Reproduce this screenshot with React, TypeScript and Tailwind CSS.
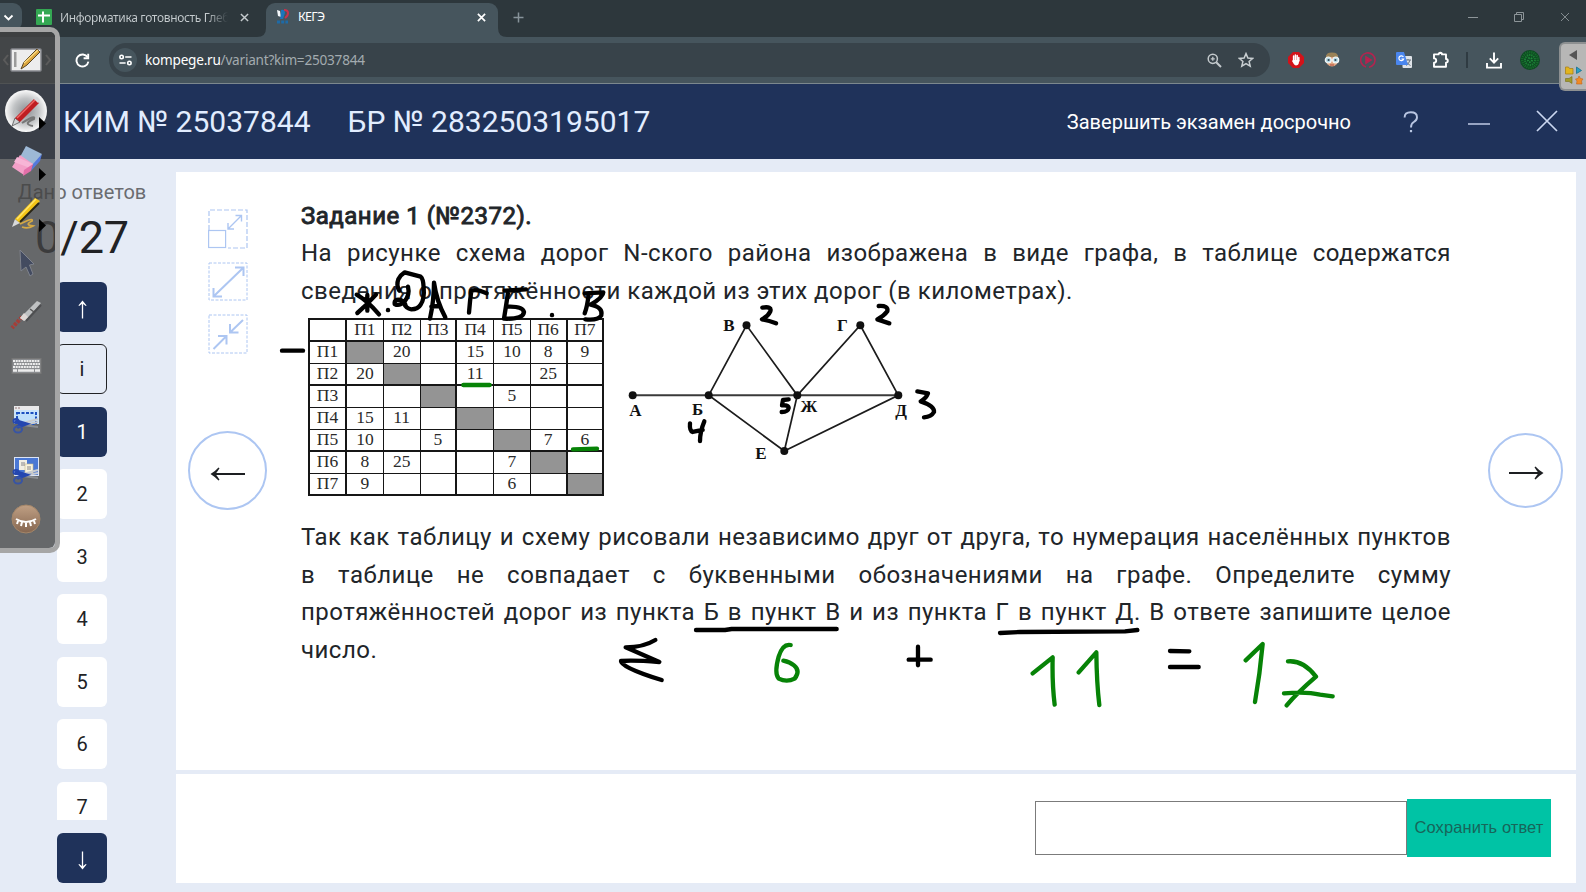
import type { ReactNode } from "react";

const numbers = ["2", "3", "4", "5", "6", "7"];

const table: string[][] = [
  ["", "П1", "П2", "П3", "П4", "П5", "П6", "П7"],
  ["П1", "#", "20", "", "15", "10", "8", "9"],
  ["П2", "20", "#", "", "11", "", "25", ""],
  ["П3", "", "", "#", "", "5", "", ""],
  ["П4", "15", "11", "", "#", "", "", ""],
  ["П5", "10", "", "5", "", "#", "7", "6"],
  ["П6", "8", "25", "", "", "7", "#", ""],
  ["П7", "9", "", "", "", "6", "", "#"],
];

const thickRight = [0, 3, 6, 7];
const thickBottom = [0, 2, 5, 7];

function CloseIcon({ size, color, width }: { size: number; color: string; width: number }) {
  return (
    <svg width={size} height={size} viewBox="0 0 10 10" fill="none" stroke={color} strokeWidth={width}>
      <path d="M1 1 L9 9 M9 1 L1 9" />
    </svg>
  );
}

function TabStrip() {
  return (
    <div className="flex h-[37px] bg-[#2d373c] font-['Noto_Sans','Open_Sans',sans-serif] text-[12.5px]">
      <div className="mt-[3px] flex h-[28px] w-[22px] items-center rounded-r-[9px] bg-[#46555d] pl-[3px]">
        <svg width="11" height="11" viewBox="0 0 11 11" fill="none" stroke="#fff" strokeWidth="1.8"><path d="M1.5 3.5 L5.5 7.5 L9.5 3.5" /></svg>
      </div>
      <div className="flex h-[34px] w-[244px] items-center pl-[14px]">
        <svg width="16" height="16" viewBox="0 0 16 16"><rect width="16" height="16" rx="1" fill="#34a853" /><path d="M7 2.5 V13.5 M2 6.5 H14" stroke="#fff" strokeWidth="2" /></svg>
        <div className="ml-[8px] mt-[1px] w-[168px] whitespace-nowrap bg-gradient-to-r from-[#c5cbce] from-88% to-[#2d373c] bg-clip-text text-[12px] tracking-[-0.34px] text-transparent">
          Информатика готовность Глеб
        </div>
        <div className="ml-[12px]"><CloseIcon size={9} color="#c5cbce" width={1.6} /></div>
      </div>
      <div className="relative mt-[3px] flex h-[34px] w-[232px] items-center rounded-t-[9px] bg-[#46555d] pl-[10px] pb-[6px]">
        <svg width="13" height="16" viewBox="0 0 13 16">
          <path d="M1 1 L4 2 L5 8 L2 7 Z" fill="#f4f8fb" />
          <path d="M5 1 Q9 0 9 4 Q8 7 7 10 H4 Q5 6 5 1" fill="#1b75bb" />
          <path d="M8 1 Q12 1 12 4 Q12 7 9 9" fill="none" stroke="#c8324c" strokeWidth="2" />
          <path d="M1 13 H12" stroke="#1d6ba8" strokeWidth="3" strokeDasharray="3 1.2" />
        </svg>
        <span className="ml-[9px] mt-[1px] tracking-[-0.75px] text-white">КЕГЭ</span>
        <div className="ml-auto mr-[12px]"><CloseIcon size={9} color="#fff" width={1.9} /></div>
        <svg className="absolute -left-[9px] bottom-0" width="9" height="9" viewBox="0 0 9 9"><path d="M9 0 V9 H0 Q9 9 9 0" fill="#46555d" /></svg>
        <svg className="absolute -right-[9px] bottom-0" width="9" height="9" viewBox="0 0 9 9"><path d="M0 0 V9 H9 Q0 9 0 0" fill="#46555d" /></svg>
      </div>
      <div className="flex h-[34px] w-[40px] items-center justify-center">
        <svg width="11" height="11" viewBox="0 0 11 11" stroke="#87939a" strokeWidth="1.5"><path d="M5.5 0.5 V10.5 M0.5 5.5 H10.5" /></svg>
      </div>
      <div className="ml-auto flex h-[34px] items-center pr-[16px]">
        <svg width="10" height="10" viewBox="0 0 10 10" stroke="#8d9599"><path d="M0 5.5 H10" /></svg>
        <svg className="ml-[36px]" width="10" height="10" viewBox="0 0 10 10" fill="none" stroke="#8d9599"><path d="M0.5 2.5 H7.5 V9.5 H0.5 Z M2.5 2.5 V0.5 H9.5 V7.5 H7.5" /></svg>
        <div className="ml-[36px]"><CloseIcon size={10} color="#8d9599" width={0.9} /></div>
      </div>
    </div>
  );
}

function AddressBar() {
  return (
    <div className="flex h-[47px] items-center border-b border-[#7c888e] bg-[#46555d] pl-[75px]">
      <svg width="15" height="15" viewBox="0 0 15 15" fill="none" stroke="#fff" strokeWidth="1.9"><path d="M12.6 4.3 A6 6 0 1 0 13.4 8.6" /><path d="M13.2 0.8 V5.2 H8.6" /></svg>
      <div className="ml-[19px] flex h-[34px] w-[1161px] items-center rounded-full bg-[#38434a] pl-[4px] pr-[16px]">
        <div className="flex size-[24px] items-center justify-center rounded-full bg-[#46555d]">
          <svg width="13" height="12" viewBox="0 0 13 12" fill="none" stroke="#fff" strokeWidth="1.6"><circle cx="2.6" cy="3" r="1.7" /><path d="M6.2 3 H12.5 M0.5 9 H6.6" /><circle cx="10.4" cy="9" r="1.7" /></svg>
        </div>
        <span className="ml-[8px] whitespace-nowrap font-['Noto_Sans','Open_Sans',sans-serif] text-[13.6px] tracking-[-0.23px] text-[#a3abaf]">
          <span className="text-white">kompege.ru</span>/variant?kim=25037844
        </span>
        <svg className="ml-auto" width="15" height="15" viewBox="0 0 15 15" fill="none" stroke="#c3c9cc" strokeWidth="1.5"><circle cx="5.8" cy="5.8" r="4.6" /><path d="M9.2 9.2 L14 14" strokeWidth="2" /><path d="M3.8 5.8 H7.8 M5.8 3.8 V7.8" strokeWidth="1.3" /></svg>
        <svg className="ml-[16px]" width="16" height="16" viewBox="0 0 16 16" fill="none" stroke="#c9cfd2" strokeWidth="1.5"><path d="M8 1.6 L9.9 6 L14.7 6.4 L11.1 9.5 L12.2 14.2 L8 11.7 L3.8 14.2 L4.9 9.5 L1.3 6.4 L6.1 6 Z" /></svg>
      </div>
      <div className="ml-[18px] flex items-center gap-[20px]">
        <svg width="16" height="16" viewBox="0 0 16 16"><path d="M5 0 H11 L16 5 V11 L11 16 H5 L0 11 V5 Z" fill="#d31219" /><path d="M5.6 4 V9 M7.4 3 V9 M9.2 3.6 V9 M10.8 5.4 V9" stroke="#fff" strokeWidth="1.5" strokeLinecap="round" /><path d="M5 8 H11.4 L10.6 12 Q10 13.4 8 13.4 Q6.6 13.4 5.8 12 L4 9 Z" fill="#fff" /></svg>
        <svg width="16" height="16" viewBox="0 0 16 16"><path d="M2 6 Q2 1 8 1 Q14 1 14 6 L13 12 Q8 17 3 12 Z" fill="#e0a682" /><path d="M2 5 Q2 0.6 8 0.6 Q14 0.6 14 5 Z" fill="#9a8257" /><circle cx="4.3" cy="8" r="3" fill="#b8dde8" stroke="#f5f7f7" strokeWidth="1.2" /><circle cx="11.7" cy="8" r="3" fill="#b8dde8" stroke="#f5f7f7" strokeWidth="1.2" /><circle cx="4.6" cy="8" r="1.1" fill="#345" /><circle cx="11.4" cy="8" r="1.1" fill="#345" /><path d="M6 13 H10" stroke="#b34a3c" /></svg>
        <svg width="16" height="16" viewBox="0 0 16 16" fill="none" stroke="#b4234f" strokeWidth="1.6"><path d="M6 15 A7.2 7.2 0 1 1 12.200 13.800 M9 15.2 A7 7 0 0 0 13.5 12.6" /><path d="M6 5 L11 8 L6 11 Z" fill="#c21e50" /></svg>
        <svg width="16" height="16" viewBox="0 0 16 16"><rect x="6.5" y="4" width="9.5" height="12" rx="1" fill="#dfe3e8" /><path d="M9 8 H15 M12 7 V8 M14 8 Q13 12 10 13.5 M10.5 10 Q12 12.5 14.5 13.5" stroke="#69737c" fill="none" /><path d="M0 1 Q0 0 1 0 H8 L12 13 H1 Q0 13 0 12 Z" fill="#4a86ee" /><path d="M7.4 5 A2.4 2.4 0 1 0 7.6 7 H5.4" stroke="#fff" fill="none" strokeWidth="1.2" /></svg>
        <svg width="18" height="18" viewBox="0 0 18 18" fill="none" stroke="#fff" strokeWidth="1.9" strokeLinejoin="round"><path d="M2 3.4 H6.6 A1.7 1.7 0 0 1 10 3.4 H14 V8 A1.8 1.8 0 0 1 14 11.6 V15.8 H2 V11.8 A2.2 2.2 0 0 0 2 7.4 Z" /><path d="M8.3 2 V3 M15 9.8 H16" strokeWidth="2.6" /></svg>
      </div>
      <div className="ml-[16px] h-[16px] w-[2px] bg-[#2f3b42]" />
      <svg className="ml-[18px]" width="16" height="17" viewBox="0 0 16 17" fill="none" stroke="#fff" strokeWidth="1.9"><path d="M8 0.5 V10 M3.8 6.4 L8 10.6 L12.2 6.4 M1 11 V15.6 H15 V11" /></svg>
      <svg className="ml-[18px]" width="20" height="20" viewBox="0 0 20 20">
        <circle cx="10" cy="10" r="10" fill="#0d4a22" />
        <circle cx="10" cy="10" r="7.8" fill="none" stroke="#176b2c" strokeWidth="2.4" strokeDasharray="1.2 0.9" />
        <circle cx="10" cy="10" r="5" fill="none" stroke="#1b7f34" strokeWidth="2" strokeDasharray="1.4 0.8" />
        <circle cx="10" cy="10" r="2" fill="none" stroke="#1f8a3a" strokeWidth="2" strokeDasharray="1.3 1" />
      </svg>
    </div>
  );
}

function ExamHeader() {
  return (
    <div className="flex h-[75px] items-center bg-[#1f325a] pl-[63px]">
      <span className="whitespace-nowrap text-[30px] text-[#e2edff]">КИМ № 25037844</span>
      <span className="ml-[37px] whitespace-nowrap text-[30px] text-[#e2edff]">БР № 2832503195017</span>
      <div className="ml-auto flex items-center">
        <span className="whitespace-nowrap text-[20px] text-white">Завершить экзамен досрочно</span>
        <svg className="ml-[52px]" width="16" height="22" viewBox="0 0 16 22" fill="none" stroke="#b9c6e2" strokeWidth="1.9"><path d="M1.6 6.6 Q1.6 1.2 7.8 1.2 Q14 1.2 14 6.2 Q14 9.2 10.8 11 Q8 12.6 8 16.6" /><path d="M8 19 V21.2" strokeWidth="2.2" /></svg>
        <svg className="ml-[48px]" width="24" height="22" viewBox="0 0 24 22" stroke="#a5b2cf" strokeWidth="1.8"><path d="M1 13 H23" /></svg>
        <svg className="ml-[45px] mr-[28px]" width="22" height="24" viewBox="0 0 22 24" fill="none" stroke="#cbd7f0" strokeWidth="1.7"><path d="M1 1 L21 21 M21 1 L1 21" /></svg>
      </div>
    </div>
  );
}

function NavArrow({ up }: { up?: boolean }) {
  return (
    <div className="flex h-[50px] w-[50px] shrink-0 items-center justify-center rounded-[6px] bg-[#1f325a]">
      <svg className="mt-[4px]" width="9" height="19" viewBox="0 0 9 19" fill="none" stroke="#fff" strokeWidth="1.3">
        {up
          ? <><path d="M4.5 18.500 V2" /><path d="M4.500 0.500 L8.600 5.600 L7.800 6 L4.500 3.400 L1.200 6 L0.400 5.600 Z" fill="#fff" stroke="none" /></>
          : <><path d="M4.5 0.500 V17" /><path d="M4.500 18.500 L8.600 13.400 L7.800 13 L4.500 15.600 L1.200 13 L0.400 13.400 Z" fill="#fff" stroke="none" /></>}
      </svg>
    </div>
  );
}

function Sidebar() {
  return (
    <div className="flex w-[176px] flex-col items-center pr-[12px]">
      <div className="mt-[21px] whitespace-nowrap text-[20px] leading-[24px] text-[#6a6c70]">Дано ответов</div>
      <div className="mt-[7px] whitespace-nowrap text-[45px] leading-[54px] tracking-[-0.1px] text-[#212225]">0/27</div>
      <div className="mt-[17px]"><NavArrow up /></div>
      <div className="mt-[12px] flex h-[476px] flex-col gap-[12.5px] overflow-hidden text-[20px] text-[#212225]">
        <div className="flex h-[50px] w-[50px] shrink-0 items-center justify-center rounded-[6px] border border-[#212225]">i</div>
        <div className="flex h-[50px] w-[50px] shrink-0 items-center justify-center rounded-[6px] bg-[#1f325a] text-white">1</div>
        {numbers.map((n) => (
          <div key={n} className="flex h-[50px] w-[50px] shrink-0 items-center justify-center rounded-[6px] bg-white">{n}</div>
        ))}
      </div>
      <div className="mt-[13px]"><NavArrow /></div>
    </div>
  );
}

function DistanceTable() {
  return (
    <div className="grid w-[296px] grid-cols-[37px_repeat(7,36.75px)] border-l-2 border-t-2 border-[#161616] bg-white font-['Liberation_Serif',serif] text-[17.5px] text-[#2a2a2a]">
      {table.flatMap((row, r) =>
        row.map((cell, c) => (
          <div
            key={`${r}-${c}`}
            className={[
              "flex h-[22px] items-center justify-center border-[#161616] pb-px leading-none",
              thickRight.includes(c) ? "border-r-2" : "border-r",
              thickBottom.includes(r) ? "border-b-2" : "border-b",
              cell === "#" ? "bg-[#949494]" : "",
            ].join(" ")}
          >
            {cell === "#" ? "" : cell}
          </div>
        )),
      )}
    </div>
  );
}

function Graph() {
  const nodes: [number, number][] = [[32.7, 95.3], [108.7, 95.3], [146.5, 25.3], [197.3, 95.3], [260.3, 25.3], [298.3, 95.3], [184.3, 151]];
  const labels: [string, number, number][] = [["А", 35.3, 115.5], ["Б", 97.5, 114.5], ["В", 129, 30.5], ["Г", 242.3, 31], ["Ж", 209, 112.3], ["Д", 301.2, 115.5], ["Е", 161, 158.5]];
  return (
    <svg width="340" height="180" viewBox="0 0 340 180">
      <g fill="none" stroke="#1c1c1c" strokeWidth="1.7">
        <path d="M108.7 95.3 L146.5 25.3 L197.3 95.3 L260.3 25.3 L298.3 95.3 L184.3 151 Z" />
        <path d="M197.3 95.3 L184.3 151" />
        <path d="M32.7 95.3 H298.3" strokeWidth="2.1" stroke="#3a3a3a" />
      </g>
      {nodes.map(([x, y]) => <circle key={`${x}`} cx={x} cy={y} r="4" fill="#111" />)}
      {labels.map(([t, x, y]) => (
        <text key={t} x={x} y={y} textAnchor="middle" className="font-['Liberation_Serif',serif] text-[17px] font-bold" fill="#111">{t}</text>
      ))}
    </svg>
  );
}

function ViewIcons() {
  return (
    <div className="flex flex-col gap-[13px]">
      <svg width="40" height="40" viewBox="0 0 40 40" fill="none" stroke="#adc6f2" strokeWidth="1.2">
        <path d="M1 21 V1 H39 V39 H20" strokeDasharray="5 2" />
        <rect x="0.6" y="21.5" width="17" height="17" />
        <path d="M20 20 L33.5 6.5 M27.5 6.5 H33.5 V12.5 M20 14 V20 H26" strokeWidth="1.4" />
      </svg>
      <svg width="40" height="39" viewBox="0 0 40 39" fill="none" stroke="#adc6f2">
        <rect x="1" y="1" width="38" height="37" strokeDasharray="3 1.5" />
        <path d="M6 34 L35 6 M27 5.5 H35.5 V14 M5.5 26 V34.5 H14" strokeWidth="2" />
      </svg>
      <svg width="40" height="40" viewBox="0 0 40 40" fill="none" stroke="#adc6f2">
        <rect x="1" y="1" width="38" height="38" strokeDasharray="3 1.5" />
        <path d="M35 6 L22 18.5 M22 10 V18.5 H30.5 M5.5 35 L18.5 22 M10 22 H18.5 V30.5" strokeWidth="2" />
      </svg>
    </div>
  );
}

function RoundArrow({ right }: { right?: boolean }) {
  return (
    <div className={right
      ? "flex size-[75px] items-center justify-center rounded-full border-2 border-[#adc6f2] bg-white"
      : "flex size-[79px] items-center justify-center rounded-full border-2 border-[#adc6f2] bg-white"}>
      <svg className={right ? "mt-[6px]" : "mt-[7px] rotate-180"} width="36" height="14" viewBox="0 0 36 14">
        <path d="M1 7 H31" stroke="#1d1f22" strokeWidth="2" />
        <path d="M35.500 7 Q30 3.500 27.500 0.500 L26.500 1.200 Q28.500 4.500 30.500 7 Q28.500 9.500 26.500 12.800 L27.500 13.500 Q30 10.500 35.500 7 Z" fill="#1d1f22" />
      </svg>
    </div>
  );
}

function Task() {
  return (
    <div className="flex h-[598px] bg-white">
      <div className="flex w-[125px] flex-col pt-[37px]">
        <div className="pl-[31.5px]"><ViewIcons /></div>
        <div className="mt-[77px] pl-[12px]"><RoundArrow /></div>
      </div>
      <div className="w-[1150px] pt-[25.5px] text-[24px] leading-[37.8px] tracking-[0.48px] text-[#212529]">
        <h1 className="font-normal tracking-[0.5px] [-webkit-text-stroke:0.9px_#212529]">Задание 1 (№2372).</h1>
        <p className="text-justify">
          На рисунке схема дорог N-ского района изображена в виде графа, в таблице содержатся сведения о протяжённости каждой из этих дорог (в километрах).
        </p>
        <div className="flex h-[208px] pl-[7px] tracking-normal">
          <div className="pt-[7px]"><DistanceTable /></div>
          <div className="-ml-[4px] -mt-[11px]"><Graph /></div>
        </div>
        <p className="text-justify">
          Так как таблицу и схему рисовали независимо друг от друга, то нумерация населённых пунктов в таблице не совпадает с буквенными обозначениями на графе. Определите сумму протяжённостей дорог из пункта Б в пункт В и из пункта Г в пункт Д. В ответе запишите целое число.
        </p>
      </div>
      <div className="ml-auto pr-[13px] pt-[260.5px]"><RoundArrow right /></div>
    </div>
  );
}

function AnswerBar() {
  return (
    <div className="mt-[4px] flex h-[109px] items-center justify-end bg-white pb-[2px] pr-[25px]">
      <input aria-label="answer" className="h-[54px] w-[372px] border border-[#7b7b7b] bg-white outline-none" />
      <button className="h-[58px] w-[144px] whitespace-nowrap bg-[#00c3a5] pb-px font-['Liberation_Sans',sans-serif] text-[16.5px] tracking-[0.08px] text-[#17665a]">Сохранить ответ</button>
    </div>
  );
}

function Submenu() {
  return <path d="M39 31 L46 37.500 L39 44 Z" fill="#000" />;
}

function Scissors() {
  return (
    <g>
      <path d="M23 22 L38 18 M23 24 L38 21" stroke="#c9ccd0" strokeWidth="2" />
      <path d="M23 24 L38 26" stroke="#8a8d91" strokeWidth="2" />
      <path d="M15 20 L25 23 L17 26" stroke="#2547b0" strokeWidth="4" fill="none" />
      <ellipse cx="18" cy="28.5" rx="4" ry="3" stroke="#3754a5" strokeWidth="2" fill="none" />
      <ellipse cx="16" cy="20" rx="2.5" ry="2" stroke="#2547b0" strokeWidth="2" fill="none" />
    </g>
  );
}

function Tool({ children }: { children: ReactNode }) {
  return <svg width="55" height="51" viewBox="0 0 55 51">{children}</svg>;
}

function PenToolbar() {
  return (
    <div className="absolute left-0 top-[27px] z-20 h-[526px] w-[60px] rounded-r-[10px] border-b-[5px] border-r-[5px] border-t-[5px] border-[#a6a6a6]">
      <div className="flex h-full flex-col rounded-r-[6px] bg-[rgba(66,66,66,0.78)] pt-[3px]">
        <Tool>
          <path d="M8 20 L4 25 L8 30 M46 20 L50 25 L46 30" stroke="#5b5b5b" strokeWidth="2" fill="none" />
          <rect x="11" y="14" width="30" height="22" rx="1" fill="#ededed" stroke="#85878c" strokeWidth="1.5" />
          <rect x="14" y="17" width="2.5" height="15" fill="#9b9b9b" />
          <path d="M21 34 L24 27 L37 14 L40 17 L27 30 Z" fill="#dba53d" stroke="#594525" strokeWidth="1" />
          <path d="M24 28 L38 15" stroke="#fbdd87" strokeWidth="1.2" />
        </Tool>
        <Tool>
          <defs><radialGradient id="knob"><stop offset="0" stopColor="#8d9094" /><stop offset="0.6" stopColor="#c2c4c6" /><stop offset="1" stopColor="#fafafa" /></radialGradient></defs>
          <circle cx="26" cy="25" r="21" fill="url(#knob)" />
          <path d="M22 37 Q36 28 34 33 Q22 38 33 40" stroke="#777" strokeWidth="2" fill="none" />
          <path d="M12 40 L15 32 L20 36 Z" fill="#cfd2d4" stroke="#555" strokeWidth="0.8" />
          <path d="M15 32 L34 13 L39 17 L20 36 Z" fill="#bf1e22" />
          <path d="M17 32 L35 14" stroke="#f06a67" strokeWidth="1.5" />
          <path d="M34 13 L37 11 L40 14 L38 17 Z" fill="#d6d8da" />
          <Submenu />
        </Tool>
        <Tool>
          <path d="M26 9 L42 17 L34 29 L20 20 Z" fill="#9db9d6" />
          <path d="M42 17 L40 24 L31 34 L33 27 Z" fill="#5479dc" />
          <path d="M20 18 L33 27 L24 38 L12 30 Z" fill="#f3a0c8" />
          <path d="M17 20 L33 27 L30 31 L14 25 Z" fill="#f7b5d6" />
          <path d="M33 27 L31 34 L23 39 L24 33 Z" fill="#e36fa9" />
          <Submenu />
        </Tool>
        <Tool>
          <path d="M20 36 Q34 29 32 33 Q24 37 33 38 Q28 41 22 39" stroke="#d6a944" strokeWidth="1.8" fill="none" />
          <path d="M12 39 L15 31 L20 35 Z" fill="#d8d9da" />
          <path d="M15 31 L35 10 L40 13 L20 35 Z" fill="#f4c517" />
          <path d="M20 34 L39 15" stroke="#2a2617" strokeWidth="2" />
          <path d="M17 31 L36 11" stroke="#ffe46b" strokeWidth="1.6" />
          <Submenu />
        </Tool>
        <Tool>
          <path d="M20 11 L21 32 L26 28 L30 37 L33 35 L29.500 26 L34 25 Z" fill="#434b60" stroke="#7e828c" strokeWidth="1" />
        </Tool>
        <Tool>
          <g transform="translate(0 -1)">
            <path d="M22 28 L12 39" stroke="#a53d37" strokeWidth="4" strokeDasharray="3 1.2" />
            <path d="M20 29 L37 12 L41 14 L25 32 Z" fill="#bfc1c2" />
            <path d="M26 32 L41 16" stroke="#4e4f51" strokeWidth="2" />
            <path d="M20 29 L24 24 L28 28 L24 32 Z" fill="#ded7d4" />
            <path d="M30 20 L34 23" stroke="#555" strokeWidth="1.5" />
          </g>
        </Tool>
        <Tool>
          <rect x="12" y="17.500" width="29" height="15" fill="#8b8d90" stroke="#777" />
          <path d="M13 20 H40 M14 23 H40 M13 26 H40" stroke="#ededed" strokeWidth="2" strokeDasharray="2 0.7" />
          <path d="M13 29.500 H17 M18 29.500 H34 M35 29.500 H40" stroke="#ededed" strokeWidth="2.4" />
        </Tool>
        <Tool>
          <g transform="translate(0 9)">
            <rect x="14" y="5" width="25" height="18" fill="#cbe4fa" />
            <rect x="14" y="5" width="25" height="4" fill="#e9e9ea" />
            <path d="M15 7 H17 M18 7 H20" stroke="#9b7c7c" />
            <rect x="17" y="12" width="19" height="11" fill="#bfe0fb" stroke="#1b50c0" strokeWidth="2" strokeDasharray="3 1.5" />
            <Scissors />
          </g>
        </Tool>
        <Tool>
          <g transform="translate(0 9)">
            <rect x="14.500" y="5.500" width="24" height="18" fill="#4a78d4" stroke="#dce5f6" />
            <rect x="19" y="8" width="8" height="10" fill="#f2efe4" />
            <rect x="25" y="12" width="8" height="9" fill="#f8f3df" stroke="#c7b98b" strokeWidth="0.6" />
            <path d="M21 11 H25 M21 13 H25 M27 15 H31 M27 17 H31" stroke="#6c6c74" strokeWidth="0.8" />
            <Scissors />
          </g>
        </Tool>
        <Tool>
          <defs><linearGradient id="lid" x2="0" y2="1"><stop stopColor="#c0a084" /><stop offset="1" stopColor="#856650" /></linearGradient></defs>
          <circle cx="26" cy="25" r="14" fill="url(#lid)" stroke="#a48669" />
          <path d="M16 25 Q26 31 36 25 M18 27 L17 30 M22 28 L21 32 M26 29 V33 M30 28 L31 32 M34 27 L35 30" stroke="#fff" strokeWidth="2" fill="none" />
        </Tool>
      </div>
    </div>
  );
}

function SideDrawer() {
  return (
    <div className="absolute right-0 top-[42px] z-20 flex h-[49px] w-[27px] flex-col items-center rounded-l-[6px] border-2 border-r-0 border-[#8d9091] bg-[#b7b7b6] pt-[6px]">
      <svg width="25" height="36" viewBox="0 0 25 36">
        <path d="M16 0 V10 L8 5 Z" fill="#555" />
        <path d="M4.500 17 H7.500 L8.500 18.500 H12 V24 H4.500 Z" fill="#e2b51f" stroke="#a9811a" strokeWidth="0.8" />
        <path d="M15.500 17 L20.500 20.500 L15.500 23.500 Z" fill="#2a9fc4" stroke="#14708f" strokeWidth="0.8" />
        <path d="M11 26.500 V33.500 L8 31.500 H4.500 V28.500 H8 Z" fill="#a39a2b" stroke="#767018" strokeWidth="0.6" />
        <path d="M18 26 L19.500 28.500 L22 29 L20.500 31 L21 34 H15.500 L16 31 L14.500 29 L17 28.500 Z" fill="#f08b25" stroke="#c5611a" strokeWidth="0.6" />
      </svg>
    </div>
  );
}

function InkLayer() {
  return (
    <svg className="pointer-events-none absolute left-0 top-0 z-10" width="1586" height="892" viewBox="0 0 1586 892" fill="none" strokeLinecap="round" strokeLinejoin="round">
      <g transform="translate(270 260) scale(0.33333)" stroke="#000" strokeWidth="13">
        <path d="M36 272 H99" />
        <path d="M260 104 Q292 122 327 163 M318 104 Q290 135 262 159 M292 105 V152" />
        <path d="M354 150 V150.500" />
        <path d="M414 80 Q420 104 404 124 Q388 140 374 132 Q372 116 392 120 Q402 124 406 134" />
        <path d="M388 92 Q378 76 385 58 Q392 44 404 37 L452 50 Q460 56 461 84 Q464 116 452 134 Q444 148 424 148 Q408 146 402 130" />
        <path d="M492 68 Q492 120 480 176 M492 68 Q500 125 526 172 M484 140 L506 138" />
        <path d="M597 158 Q600 120 604 92 Q620 86 650 100" />
        <path d="M704 92 L768 88 M714 98 Q708 140 702 176 Q760 178 762 156 Q758 138 712 140" />
        <path d="M846 165 V165.500" />
        <path d="M944 100 L1000 97 Q1000 112 962 134 Q1000 142 994 166 Q984 182 946 178 M956 102 Q952 140 944 160" />
        <path d="M580 375 H659 M909 568 L981 566" stroke="#078307" />
      </g>
      <g transform="translate(600 280) scale(0.33333)" stroke="#000" strokeWidth="13">
        <path d="M487 83 Q516 78 511 94 Q505 108 486 118 Q508 122 528 130" />
        <path d="M836 78 Q866 76 862 94 Q852 108 832 118 Q850 124 868 130" />
        <path d="M566 358 L549 360 L546 376 Q566 374 566 384 Q564 396 545 396" />
        <path d="M270 430 Q268 452 278 456 L308 450 M313 424 Q300 455 300 483" />
        <path d="M952 334 L984 340 Q978 356 962 364 Q1004 378 1002 396 Q994 410 972 412" />
      </g>
      <g transform="translate(590 580) scale(0.33333)" stroke="#000" strokeWidth="13">
        <path d="M318 150 H405 L425 147 H740" />
        <path d="M196 180 Q160 202 107 202 L208 246 Q130 240 93 243 Q92 262 215 300" />
        <path d="M984 200 V256 M956 239 H1022" />
        <path d="M602 195 Q578 190 566 230 Q552 280 566 296 Q590 308 614 296 Q632 272 612 256 Q600 246 580 242" stroke="#078307" />
      </g>
      <g transform="translate(970 580) scale(0.33333)" stroke="#000" strokeWidth="13">
        <path d="M90 159 L150 156 L465 154 L502 150 M600 213 L658 214 M600 261 H686" />
        <path d="M188 280 L248 232 Q246 310 254 374 M326 277 L379 217 Q380 310 388 375 M827 241 L878 192 Q870 280 855 366 M954 244 Q1000 240 1038 290 Q980 340 950 376 M942 340 Q1010 334 1050 344 L1088 349" stroke="#078307" />
      </g>
    </svg>
  );
}

export default function App() {
  return (
    <div className="relative h-[892px] w-[1586px] overflow-hidden bg-[#e5ebf6] font-['Roboto',sans-serif]">
      <TabStrip />
      <AddressBar />
      <ExamHeader />
      <div className="flex h-[733px]">
        <Sidebar />
        <div className="w-[1400px] pt-[13px]">
          <Task />
          <AnswerBar />
        </div>
      </div>
      <InkLayer />
      <PenToolbar />
      <SideDrawer />
    </div>
  );
}
